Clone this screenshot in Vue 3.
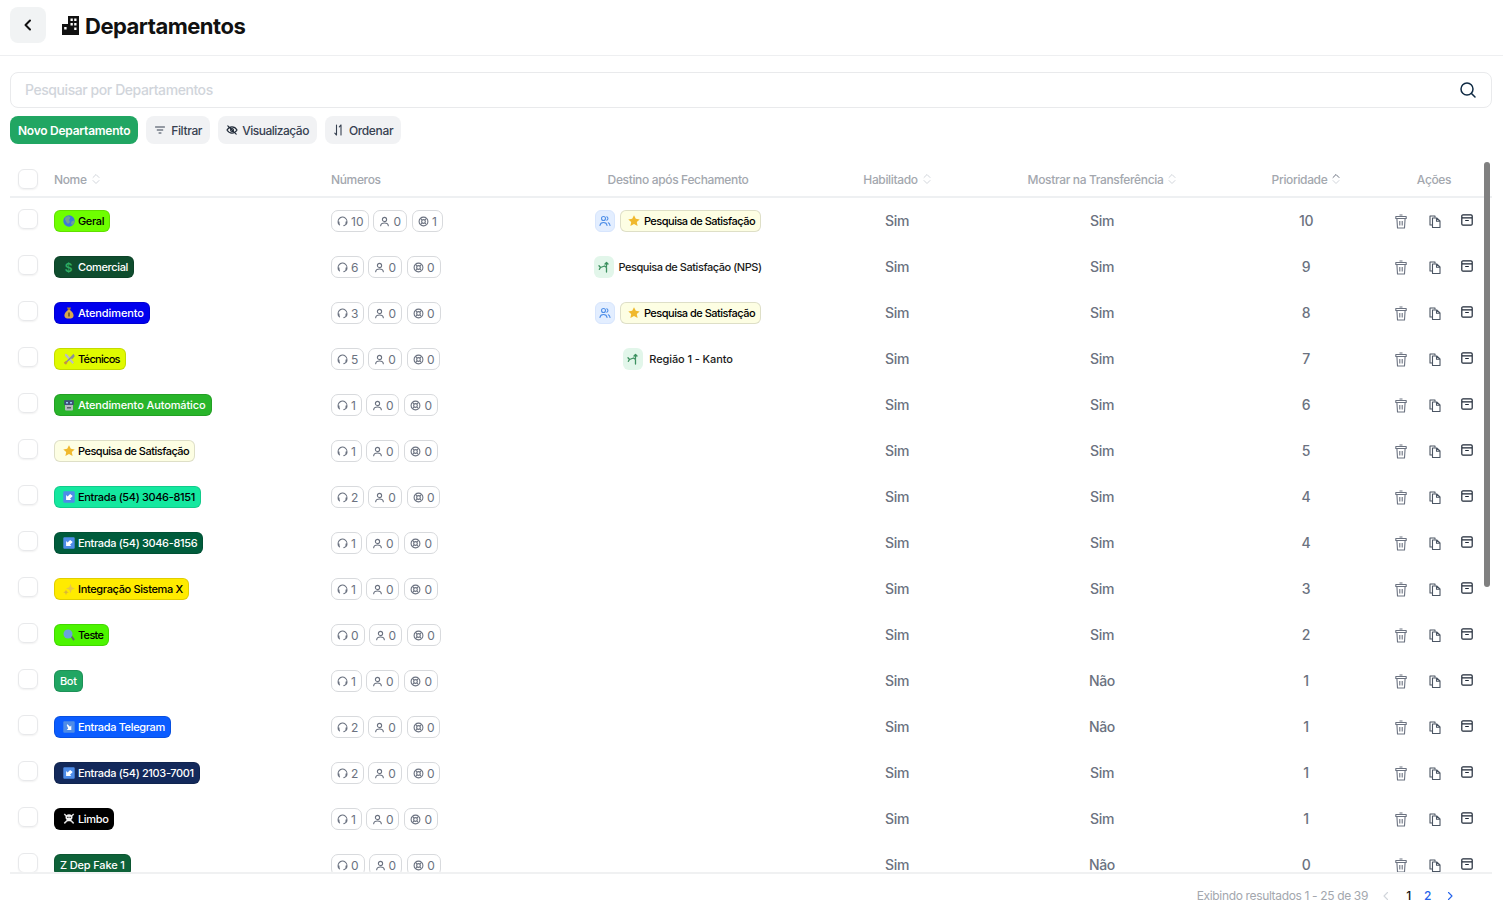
<script setup>
const emoji = {
  globe: [
    { d: 'M6 .3a5.700 5.700 0 1 0 0 11.400A5.700 5.700 0 0 0 6 .3z', fill: '#3f78d8' },
    { d: 'M2.500 2.200L5.500 1l2 1.500-1.500 2.500 1 2-2 2L3.200 7 2 4.500zM8.500 6.500l2.500-1 .3 2-2 2.500-1.300-1z', fill: '#6f9f9a' },
  ],
  bag: [
    { d: 'M4 .5h4L7 3.200H5z', fill: '#a87a35' },
    { d: 'M5 3h2c2 1.400 3.600 3.400 3.600 5.400 0 2.200-1.900 3.200-4.600 3.200s-4.600-1-4.600-3.200C1.400 6.400 3 4.400 5 3z', fill: '#d8a84e' },
    { d: 'M5.300 5.500h1.400v4H5.300z', fill: '#5c4a20' },
  ],
  tools: [
    { d: 'M2 .8l2 .5 7 8.200-1.500 1.500-7.500-8.200z', fill: '#b9bdc4' },
    { d: 'M10.500 .8L7 4.500 1.200 10l1 1.200L8 5.500l1.500.5L11.800 3z', fill: '#8a8f98' },
    { d: 'M.8 9.500L3 8l1.500 1.500-1.500 2.200z', fill: '#c8913d' },
  ],
  robot: [
    { d: 'M2 3.500h8v7a1 1 0 0 1-1 1H3a1 1 0 0 1-1-1z', fill: '#b4bac0' },
    { d: 'M1.200 1.200h9.600V6H1.200z', fill: '#3f4f78' },
    { d: 'M3 3h2v1.600H3zM7 3h2v1.600H7z', fill: '#8fd0f0' },
    { d: 'M4 8h4v1.500H4z', fill: '#59606a' },
  ],
  star: [
    { d: 'M6 .3l1.800 3.500 3.900.6-2.900 2.700.8 3.900L6 9l-3.600 2 .8-3.900L.3 4.400l3.900-.6z', fill: '#f0b92d' },
  ],
  inbox: [
    { d: 'M1.300.3h9.400a1 1 0 0 1 1 1v9.400a1 1 0 0 1-1 1H1.300a1 1 0 0 1-1-1V1.300a1 1 0 0 1 1-1z', fill: '#4e8ce8' },
    { d: 'M9 3.200l.9.900-2.700 2.700 1.300 1.300H3.300V3.100l1.500 1.500L7.300 2.100z', fill: '#fff', transform: 'translate(-.2 1)' },
  ],
  outbox: [
    { d: 'M1.300.3h9.400a1 1 0 0 1 1 1v9.400a1 1 0 0 1-1 1H1.300a1 1 0 0 1-1-1V1.300a1 1 0 0 1 1-1z', fill: '#4e8ce8' },
    { d: 'M3 3.800l.8-.8 2.500 2.500 1.300-1.300v4.600H3l1.500-1.500z', fill: '#fff', transform: 'translate(.7 .3)' },
  ],
  sparkle: [
    { d: 'M7.500 .8l1.200 3.400L12 5.500 8.700 6.800 7.500 10.200 6.300 6.800 3 5.500 6.300 4.200z', fill: '#e6c64a' },
    { d: 'M3 6.500l.8 2 2 .8-2 .8L3 12.200l-.8-2.100-2-.8 2-.8z', fill: '#d9b53a' },
  ],
  search: [
    { d: 'M7.500 7.500l1.300-1 3 3.700-1.500 1.500z', fill: '#5d6670' },
    { d: 'M5 .5a4.500 4.500 0 1 0 0 9 4.500 4.500 0 0 0 0-9z', fill: '#6aa2dc' },
  ],
  skull: [
    { d: 'M.8 1.500l1-1 9.400 9.300-1 1.200zM10.200 .5l1 1-9.400 9.500-1-1.200z', fill: '#dcdcdc' },
    { d: 'M6 1.200c2.200 0 3.500 1.300 3.500 3.100 0 1.300-.7 2.200-1.500 2.600v1.400H4V6.900C3.200 6.500 2.500 5.600 2.500 4.300c0-1.800 1.300-3.100 3.500-3.100z', fill: '#f4f4f4' },
    { d: 'M4.200 3.700h1.300v1.400H4.200zM6.500 3.700h1.300v1.400H6.500z', fill: '#222' },
  ],
}

// track: letter spacing for names that run wider or narrower than the default
const rows = [
  { name: 'Geral', icon: 'globe', bg: '#6eff00', fg: '#000', counts: [10, 0, 1], dest: 'queue', prio: 10 },
  { name: 'Comercial', icon: 'dollar', bg: '#0f4d2e', fg: '#fff', counts: [6, 0, 0], dest: 'nps', prio: 9 },
  { name: 'Atendimento', icon: 'bag', bg: '#0000ee', fg: '#fff', counts: [3, 0, 0], dest: 'queue', prio: 8, track: '-0.1px' },
  { name: 'Técnicos', icon: 'tools', bg: '#e0fa00', fg: '#000', counts: [5, 0, 0], dest: 'kanto', prio: 7, track: '-0.7px' },
  { name: 'Atendimento Automático', icon: 'robot', bg: '#28b52a', fg: '#fff', counts: [1, 0, 0], prio: 6, track: '-0.12px' },
  { name: 'Pesquisa de Satisfação', icon: 'star', bg: '#fdfee3', fg: '#000', counts: [1, 0, 0], prio: 5, track: '-0.5px' },
  { name: 'Entrada (54) 3046-8151', icon: 'inbox', bg: '#14e89f', fg: '#000', counts: [2, 0, 0], prio: 4 },
  { name: 'Entrada (54) 3046-8156', icon: 'inbox', bg: '#005c3c', fg: '#fff', counts: [1, 0, 0], prio: 4 },
  { name: 'Integração Sistema X', icon: 'sparkle', bg: '#ffeb00', fg: '#000', counts: [1, 0, 0], prio: 3 },
  { name: 'Teste', icon: 'search', bg: '#4cf500', fg: '#000', counts: [0, 0, 0], prio: 2, track: '-0.7px' },
  { name: 'Bot', bg: '#21a663', fg: '#fff', counts: [1, 0, 0], prio: 1, transfer: 'Não' },
  { name: 'Entrada Telegram', icon: 'outbox', bg: '#0a5cff', fg: '#fff', counts: [2, 0, 0], prio: 1, transfer: 'Não' },
  { name: 'Entrada (54) 2103-7001', icon: 'inbox', bg: '#13295b', fg: '#fff', counts: [2, 0, 0], prio: 1 },
  { name: 'Limbo', icon: 'skull', bg: '#000000', fg: '#fff', counts: [1, 0, 0], prio: 1 },
  { name: 'Z Dep Fake 1', bg: '#0e6239', fg: '#fff', counts: [0, 0, 0], prio: 0, transfer: 'Não', track: '-0.15px' },
]
</script>

<template>
  <div class="page">
    <header class="topbar">
      <button class="back">
        <svg width="16" height="16" viewBox="0 0 16 16" fill="none" stroke="#111" stroke-width="2" stroke-linecap="round" stroke-linejoin="round"><path d="M10 3.500 5.500 8l4.500 4.500" /></svg>
      </button>
      <svg class="title-icon" width="17" height="19" viewBox="0 0 17 19" fill="#111">
        <path d="M6 0h11v19H6zM8.500 2.500V5h2.300V2.500zm3.700 0V5h2.300V2.500zM8.500 7v2.500h2.300V7zm3.700 0v2.500h2.300V7zm0 4.500V14h2.300v-2.500z" fill-rule="evenodd" />
        <path d="M0 8h7v11H0zM2.200 11v2.500h2.400V11z" fill-rule="evenodd" />
      </svg>
      <h1>Departamentos</h1>
    </header>

    <div class="search">
      <input type="text" placeholder="Pesquisar por Departamentos" />
      <svg width="18" height="18" viewBox="0 0 18 18" fill="none" stroke="#0f2a43" stroke-width="1.500" stroke-linecap="round"><circle cx="8" cy="8" r="6" /><path d="m12.500 12.500 3.500 3.500" /></svg>
    </div>

    <div class="toolbar">
      <button class="btn primary">Novo Departamento</button>
      <button class="btn btn-filter">
        <svg width="12" height="12" viewBox="0 0 12 12" fill="none" stroke="#374151" stroke-width="1" stroke-linecap="round"><path d="M1.500 3h9M3.200 6h5.600M5 9h2" /></svg>
        Filtrar
      </button>
      <button class="btn btn-view">
        <svg width="12" height="12" viewBox="0 0 12 12" fill="none" stroke="#1f2937" stroke-width="1.200" stroke-linecap="round"><path d="M1 6c1.300-2.200 3-3.200 5-3.200S9.700 3.800 11 6c-1.300 2.200-3 3.200-5 3.200S2.300 8.200 1 6z" /><circle cx="6" cy="6" r="1.400" /><path d="m1.800 1.800 8.400 8.400" /></svg>
        Visualização
      </button>
      <button class="btn">
        <svg width="12" height="12" viewBox="0 0 12 12" fill="none" stroke="#374151" stroke-width="1.100" stroke-linecap="round" stroke-linejoin="round"><path d="M3.500 1v10M1.800 9.200l1.700 1.800M8 11V1M6.300 2.800 8 1" /></svg>
        Ordenar
      </button>
    </div>

    <div class="table-wrap">
      <div class="scroller">
        <div class="row head">
          <div class="cell-check"><span class="check"></span></div>
          <div class="cell-left">Nome
            <svg class="sort" width="8" height="12" viewBox="0 0 8 12" fill="none" stroke="#d1d5db" stroke-width="1" stroke-linecap="round" stroke-linejoin="round"><path d="M1 4.500 4 1.500l3 3M1 7.500l3 3 3-3" /></svg>
          </div>
          <div class="cell-left">Números</div>
          <div class="cell-center">Destino após Fechamento</div>
          <div class="cell-center">Habilitado
            <svg class="sort" width="8" height="12" viewBox="0 0 8 12" fill="none" stroke="#d1d5db" stroke-width="1" stroke-linecap="round" stroke-linejoin="round"><path d="M1 4.500 4 1.500l3 3M1 7.500l3 3 3-3" /></svg>
          </div>
          <div class="cell-center">Mostrar na Transferência
            <svg class="sort" width="8" height="12" viewBox="0 0 8 12" fill="none" stroke="#d1d5db" stroke-width="1" stroke-linecap="round" stroke-linejoin="round"><path d="M1 4.500 4 1.500l3 3M1 7.500l3 3 3-3" /></svg>
          </div>
          <div class="cell-center">Prioridade
            <svg class="sort" width="8" height="12" viewBox="0 0 8 12" fill="none" stroke-width="1" stroke-linecap="round" stroke-linejoin="round"><path d="M1 4.500 4 1.500l3 3" stroke="#6b7280" /><path d="M1 7.500l3 3 3-3" stroke="#d1d5db" /></svg>
          </div>
          <div class="cell-center">Ações</div>
        </div>

        <div v-for="row in rows" :key="row.name" class="row">
          <div class="cell-check"><span class="check"></span></div>
          <div class="cell-left">
            <span class="tag" :style="{ background: row.bg, color: row.fg, letterSpacing: row.track }">
              <span v-if="row.icon === 'dollar'" class="tag-icon dollar">$</span>
              <span v-else-if="row.icon" class="tag-icon">
                <svg width="12" height="12" viewBox="0 0 12 12">
                  <path v-for="p in emoji[row.icon]" :key="p.d" :d="p.d" :fill="p.fill" :transform="p.transform" />
                </svg>
              </span>
              {{ row.name }}
            </span>
          </div>
          <div class="cell-left counts">
            <span class="count">
              <svg width="11" height="11" viewBox="0 0 12 12" fill="none" stroke="#6b7280" stroke-width="1.200" stroke-linecap="round"><path d="M2.800 9.600A4.800 4.800 0 1 1 9.800 9c-.6.9-1.300 1.300-2.300 1.500" /><path d="M1.800 6.600v1.800M10.200 6.600v1.800" stroke-width="1.800" /></svg>
              {{ row.counts[0] }}
            </span>
            <span class="count">
              <svg width="11" height="11" viewBox="0 0 12 12" fill="none" stroke="#6b7280" stroke-width="1.200" stroke-linecap="round"><circle cx="6" cy="3.800" r="2.300" /><path d="M1.800 10.700c.3-2.200 2-3 4.200-3s3.900.8 4.200 3" /></svg>
              {{ row.counts[1] }}
            </span>
            <span class="count last">
              <svg width="11" height="11" viewBox="0 0 12 12" fill="none" stroke="#6b7280" stroke-width="1.200"><circle cx="6" cy="6" r="4.800" /><circle cx="6" cy="6" r="2" /><path d="m2.700 2.700 1.900 1.900M9.300 2.700 7.400 4.600M2.700 9.300l1.900-1.900M9.300 9.300 7.400 7.400" /></svg>
              {{ row.counts[2] }}
            </span>
          </div>
          <div class="cell-center dest" :class="row.dest">
            <template v-if="row.dest === 'queue'">
              <span class="dest-icon blue">
                <svg width="12" height="12" viewBox="0 0 12 12" fill="none" stroke="#4f8fe8" stroke-width="1.100" stroke-linecap="round"><circle cx="4.500" cy="3.500" r="2" /><path d="M1 10.500c.2-2 1.600-3 3.500-3s3.300 1 3.500 3" /><path d="M7.800 1.700a2 2 0 0 1 0 3.600M9.300 7.700c1 .5 1.600 1.500 1.700 2.800" /></svg>
              </span>
              <span class="tag survey">
                <span class="tag-icon">
                  <svg width="12" height="12" viewBox="0 0 12 12"><path v-for="p in emoji.star" :key="p.d" :d="p.d" :fill="p.fill" /></svg>
                </span>
                Pesquisa de Satisfação
              </span>
            </template>
            <template v-else-if="row.dest">
              <span class="dest-icon green">
                <svg width="12" height="12" viewBox="0 0 12 12" fill="none" stroke="#3d9160" stroke-width="1.300" stroke-linecap="round" stroke-linejoin="round"><path d="M8.500 11V6.500L6.500 5 2.500 6.500M1 4.800l1.500 1.700L1.300 8.300M8.500 1.500v4M7 3l1.500-1.500L10 3" /></svg>
              </span>
              <span class="plain">{{ row.dest === 'nps' ? 'Pesquisa de Satisfação (NPS)' : 'Região 1 - Kanto' }}</span>
            </template>
          </div>
          <div class="cell-center value">Sim</div>
          <div class="cell-center value">{{ row.transfer || 'Sim' }}</div>
          <div class="cell-center value">{{ row.prio }}</div>
          <div class="actions">
            <svg class="trash" width="14" height="15" viewBox="0 0 14 15" fill="none" stroke="#6b7280" stroke-width="1.100" stroke-linejoin="round"><path d="M5.500 1h3M1.800 2.500h10.400v2H1.800zM2.900 4.500l.6 9.500h7l.6-9.500M5.800 7v4.500M8.200 7v4.500" /></svg>
            <svg width="14" height="14" viewBox="0 0 14 14" fill="none" stroke="#4b5563" stroke-width="1.100" stroke-linejoin="round"><path d="M4 11H2V2h5v1.500" /><path d="M4.500 4h4.200L12 7v6.500H4.500zM8.500 4v3.200H12" /></svg>
            <svg class="archive" width="12" height="12" viewBox="0 0 12 12" fill="none" stroke="#1f2937" stroke-width="1.200" stroke-linejoin="round"><path d="M2 .8h8A1.200 1.200 0 0 1 11.200 2v8a1.200 1.200 0 0 1-1.200 1.200H2A1.200 1.200 0 0 1 .8 10V2A1.200 1.200 0 0 1 2 .8zM.8 3.800h10.400M4.200 6.500h3.600" /></svg>
          </div>
        </div>
      </div>
      <div class="thumb"></div>
    </div>

    <footer class="footer">
      <span class="results">Exibindo resultados 1 - 25 de 39</span>
      <nav class="pager">
        <svg width="10" height="10" viewBox="0 0 10 10" fill="none" stroke="#d1d5db" stroke-width="1.100" stroke-linecap="round" stroke-linejoin="round"><path d="M6.500 1.500 3 5l3.500 3.500" /></svg>
        <span class="pages">
          <span class="page-no current">1</span>
          <span class="page-no link">2</span>
        </span>
        <svg width="10" height="10" viewBox="0 0 10 10" fill="none" stroke="#2563eb" stroke-width="1.100" stroke-linecap="round" stroke-linejoin="round"><path d="M3.500 1.500 7 5 3.500 8.500" /></svg>
      </nav>
    </footer>
  </div>
</template>

<style>
html, body {
  margin: 0;
  overflow: hidden;
  background: #fff;
}
</style>

<style scoped>
.page {
  display: flex;
  flex-direction: column;
  height: 100vh;
  font-family: Inter, "Liberation Sans", sans-serif;
  letter-spacing: -0.35px;
  color: #111;
  box-sizing: border-box;
}
.topbar {
  display: flex;
  align-items: center;
  height: 55px;
  padding-left: 10px;
  border-bottom: 1px solid #eeeff1;
  flex: none;
}
.back {
  display: flex;
  align-items: center;
  justify-content: center;
  width: 36px;
  height: 36px;
  margin-top: -5px;
  padding: 0;
  border: 0;
  border-radius: 8px;
  background: #f1f3f4;
}
.title-icon {
  margin: -5px 6px 0 16px;
}
h1 {
  margin: -3px 0 0;
  font-size: 22px;
  font-weight: 700;
  line-height: 28px;
  letter-spacing: -0.5px;
}
.search {
  display: flex;
  align-items: center;
  flex: none;
  height: 36px;
  margin: 16px 11px 0 10px;
  padding: 0 14px;
  border: 1px solid #e9eaec;
  border-radius: 8px;
  box-sizing: border-box;
}
.search input {
  flex: 1;
  border: 0;
  outline: 0;
  padding: 0 0 2px;
  font: 500 14px Inter, "Liberation Sans", sans-serif;
  letter-spacing: -0.43px;
}
.search input::placeholder {
  color: #d1d5db;
}
.toolbar {
  display: flex;
  flex: none;
  gap: 8px;
  margin: 8px 0 18px 10px;
}
.btn {
  display: flex;
  align-items: center;
  gap: 4px;
  height: 28px;
  padding: 0 8px;
  border: 0;
  border-radius: 8px;
  background: #f1f2f4;
  color: #374151;
  font: 500 12px Inter, "Liberation Sans", sans-serif;
  letter-spacing: -0.35px;
}
.btn-filter {
  gap: 5px;
}
.btn-view {
  letter-spacing: -0.5px;
}
.primary {
  background: #21a663;
  color: #fff;
  font-weight: 600;
  letter-spacing: -0.25px;
}
.table-wrap {
  position: relative;
  flex: 1;
  min-height: 0;
  margin: 0 11px 0 10px;
}
.scroller {
  height: 100%;
  overflow: hidden;
}
.thumb {
  position: absolute;
  top: 0;
  right: 2px;
  width: 6px;
  height: 425px;
  border-radius: 3px;
  background: #808080;
}
.row {
  display: grid;
  grid-template-columns: 36px 277px 215px 280px 158px 252px 156px 100px;
  align-items: center;
  height: 46px;
}
.head {
  height: 36px;
  border-bottom: 2px solid #eef0f2;
  box-sizing: border-box;
  background: #fff;
  color: #a3a7ae;
  font-size: 12px;
  font-weight: 500;
}
.cell-check {
  padding-left: 8px;
}
.check {
  display: block;
  width: 20px;
  height: 20px;
  margin-bottom: 4px;
  border: 1px solid #e8e9eb;
  border-radius: 6px;
  box-sizing: border-box;
  box-shadow: 0 1px 2px rgba(0, 0, 0, 0.06);
}
.head .check {
  margin-bottom: 0;
}
.cell-left {
  display: flex;
  align-items: center;
  gap: 4px;
  padding-left: 8px;
  white-space: nowrap;
}
.cell-center {
  display: flex;
  align-items: center;
  justify-content: center;
  gap: 4px;
  white-space: nowrap;
}
.sort {
  margin: -1px 0 0 1px;
}
.tag {
  display: inline-flex;
  align-items: center;
  height: 22px;
  padding: 0 5px;
  border: 1px solid rgba(0, 0, 0, 0.12);
  border-radius: 6px;
  box-sizing: border-box;
  font-size: 11px;
  font-weight: 500;
  white-space: nowrap;
}
.tag-icon {
  display: flex;
  align-items: center;
  justify-content: center;
  width: 17px;
  margin-right: 1px;
}
.dollar {
  color: #2fae62;
  font-size: 12px;
  font-weight: 600;
}
.counts {
  gap: 4px;
}
.count {
  display: inline-flex;
  align-items: center;
  gap: 3px;
  height: 22px;
  padding: 0 5px;
  border: 1px solid #d8dadd;
  border-radius: 7px;
  box-sizing: border-box;
  color: #6b7280;
  font-size: 12px;
  letter-spacing: 0;
}
.last {
  margin-left: 1px;
}
.dest {
  gap: 5px;
}
.dest.nps {
  gap: 4px;
}
.dest.kanto {
  gap: 6px;
}
.dest-icon {
  display: flex;
  align-items: center;
  justify-content: center;
  width: 20px;
  height: 22px;
  border-radius: 6px;
}
.blue {
  background: #e3eeff;
  border: 1px solid #d7e5fd;
  box-sizing: border-box;
}
.green {
  background: #e2f6ea;
}
.survey {
  background: #fdfee3;
  color: #000;
  letter-spacing: -0.5px;
}
.plain {
  font-size: 11px;
  font-weight: 500;
  letter-spacing: -0.45px;
  color: #1b1b1b;
}
.kanto .plain {
  letter-spacing: -0.1px;
}
.value {
  padding-bottom: 2px;
  color: #6b7280;
  font-size: 14px;
  font-weight: 500;
}
.actions {
  display: flex;
  align-items: center;
  gap: 20px;
  padding-left: 10px;
}
.trash {
  margin-top: 1px;
}
.archive {
  margin: -2px 0 0 -1px;
}
.footer {
  display: flex;
  align-items: center;
  justify-content: flex-end;
  flex: none;
  height: 41px;
  margin: 0 11px 0 10px;
  padding-top: 4px;
  border-top: 2px solid #f0f1f2;
  box-sizing: border-box;
  font-size: 12px;
}
.results {
  color: #a3a7ae;
}
.pager {
  display: flex;
  align-items: center;
  gap: 8px;
  margin: 0 37px 0 13px;
}
.pages {
  display: flex;
}
.page-no {
  width: 19px;
  text-align: center;
  font-size: 12px;
  font-weight: 500;
}
.current {
  color: #111;
}
.link {
  color: #2563eb;
}
</style>
